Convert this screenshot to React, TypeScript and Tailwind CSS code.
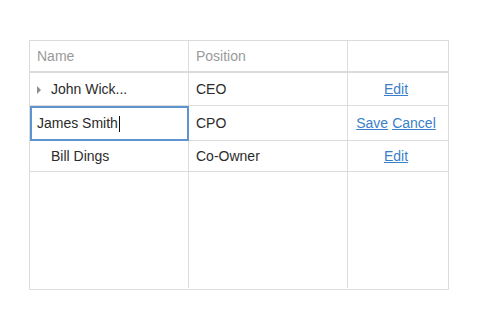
import React from "react";

export default function App() {
  return (
    <div className="w-[499px] h-[331px] bg-white pt-[40px] pl-[29px]" style={{ fontFamily: '"Liberation Sans", Arial, sans-serif' }}>
      <div className="w-[420px] h-[250px] border border-[#dcdcdc] flex flex-col text-[14px] text-[#2b2b2b]">
        {/* header */}
        <div className="flex h-[32px] border-b-2 border-[#dcdcdc] text-[#9a9a9a]">
          <div className="w-[159px] border-r border-[#dcdcdc] pl-[7px] flex items-center">Name</div>
          <div className="w-[159px] border-r border-[#dcdcdc] pl-[7px] flex items-center">Position</div>
          <div className="flex-1"></div>
        </div>
        {/* row 1 */}
        <div className="flex h-[33px] border-b border-[#dcdcdc]">
          <div className="w-[159px] border-r border-[#dcdcdc] pl-[7px] flex items-center">
            <svg width="5" height="8" viewBox="0 0 5 8" className="mr-[9px] mt-[1px]">
              <path d="M0 0 L4 4 L0 8 Z" fill="#8f8f8f" />
            </svg>
            <span>John Wick...</span>
          </div>
          <div className="w-[159px] border-r border-[#dcdcdc] pl-[7px] flex items-center">CEO</div>
          <div className="flex-1 flex items-center justify-center pr-[4px]">
            <a className="text-[#3a7fc8] underline cursor-pointer">Edit</a>
          </div>
        </div>
        {/* row 2 (editing) */}
        <div className="flex h-[35px]">
          <div className="w-[159px] h-[35px] border-2 border-[#5e94cf] pl-[5px] flex items-center">
            <span>James Smith</span>
            <span className="inline-block w-[1px] h-[16px] bg-[#111] ml-[1px]"></span>
          </div>
          <div className="w-[159px] border-r border-b border-[#dcdcdc] pl-[7px] flex items-center">CPO</div>
          <div className="flex-1 border-b border-[#dcdcdc] flex items-center justify-center gap-[4px] pr-[4px]">
            <a className="text-[#3a7fc8] underline cursor-pointer">Save</a>
            <a className="text-[#3a7fc8] underline cursor-pointer">Cancel</a>
          </div>
        </div>
        {/* row 3 */}
        <div className="flex h-[31px] border-b border-[#dcdcdc]">
          <div className="w-[159px] border-r border-[#dcdcdc] pl-[21px] flex items-center">Bill Dings</div>
          <div className="w-[159px] border-r border-[#dcdcdc] pl-[7px] flex items-center">Co-Owner</div>
          <div className="flex-1 flex items-center justify-center pr-[4px]">
            <a className="text-[#3a7fc8] underline cursor-pointer">Edit</a>
          </div>
        </div>
        {/* filler */}
        <div className="flex flex-1">
          <div className="w-[159px] h-[116px] border-r border-[#dcdcdc]"></div>
          <div className="w-[159px] h-[116px] border-r border-[#dcdcdc]"></div>
          <div className="flex-1"></div>
        </div>
      </div>
    </div>
  );
}
